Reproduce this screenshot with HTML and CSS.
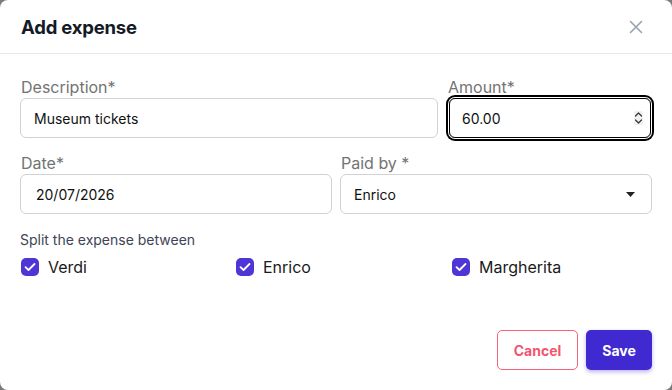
FILE: index.html
```html
<!DOCTYPE html>
<html>
<head>
<meta charset="utf-8">
<link rel="stylesheet" href="styles.css">
</head>
<body>
<div class="dialog">
  <div class="header">
    <h1 class="title">Add expense</h1>
    <button class="close" aria-label="Close">
      <svg width="14" height="14" viewBox="0 0 14 14"><path d="M1.5 1.5 L12.5 12.5 M12.5 1.5 L1.5 12.5" stroke="#9aa2ae" stroke-width="1.6" stroke-linecap="round"/></svg>
    </button>
  </div>
  <div class="body">
    <div class="row row-a">
      <div class="field">
        <label class="label">Description*</label>
        <div class="input">Museum tickets</div>
      </div>
      <div class="field">
        <label class="label">Amount*</label>
        <div class="input focused">
          <span>60.00</span>
          <svg class="spin" width="9" height="14" viewBox="0 0 9 14"><path d="M1.5 5 L4.5 2 L7.5 5 M1.5 9 L4.5 12 L7.5 9" fill="none" stroke="#333" stroke-width="1.2" stroke-linecap="round" stroke-linejoin="round"/></svg>
        </div>
      </div>
    </div>
    <div class="row row-b">
      <div class="field">
        <label class="label">Date*</label>
        <div class="input">20/07/2026</div>
      </div>
      <div class="field">
        <label class="label">Paid by *</label>
        <div class="input select">
          <span>Enrico</span>
          <svg width="9" height="5" viewBox="0 0 9 5"><path d="M0 0 H9 L4.5 5 Z" fill="#222"/></svg>
        </div>
      </div>
    </div>
    <div class="split">
      <div class="split-label">Split the expense between</div>
      <div class="checks">
        <label class="check"><span class="box"><svg width="12" height="10" viewBox="0 0 12 10"><path d="M1.5 5.2 L4.5 8 L10.5 2" fill="none" stroke="#fff" stroke-width="1.8" stroke-linecap="round" stroke-linejoin="round"/></svg></span>Verdi</label>
        <label class="check"><span class="box"><svg width="12" height="10" viewBox="0 0 12 10"><path d="M1.5 5.2 L4.5 8 L10.5 2" fill="none" stroke="#fff" stroke-width="1.8" stroke-linecap="round" stroke-linejoin="round"/></svg></span>Enrico</label>
        <label class="check"><span class="box"><svg width="12" height="10" viewBox="0 0 12 10"><path d="M1.5 5.2 L4.5 8 L10.5 2" fill="none" stroke="#fff" stroke-width="1.8" stroke-linecap="round" stroke-linejoin="round"/></svg></span>Margherita</label>
      </div>
    </div>
  </div>
  <div class="footer">
    <button class="btn cancel">Cancel</button>
    <button class="btn save">Save</button>
  </div>
</div>
</body>
</html>
```

FILE: styles.css
```css
* { box-sizing: border-box; }
html, body { margin: 0; padding: 0; }
body {
  background: #7b7b7b;
  font-family: Inter, "Liberation Sans", sans-serif;
  width: 672px;
  height: 390px;
  overflow: hidden;
}
.dialog {
  background: #fff;
  width: 672px;
  height: 390px;
  border-radius: 8px;
  display: flex;
  flex-direction: column;
}
.header {
  height: 54px;
  border-bottom: 1px solid #e8e8ea;
  display: flex;
  align-items: center;
  justify-content: space-between;
  padding: 0 29px 0 21px;
}
.title {
  margin: 0;
  font-size: 18.5px;
  font-weight: 700;
  color: #141a26;
  letter-spacing: -0.2px;
}
.close {
  border: 0;
  background: none;
  padding: 0;
  width: 14px;
  height: 14px;
  display: flex;
}
.body {
  padding: 23px 20px 0 20px;
  flex: 1;
}
.row {
  display: grid;
  gap: 8px;
}
.row-a { grid-template-columns: 418px 1fr; gap: 9px; }
.row-b { grid-template-columns: 1fr 1fr; margin-top: 15px; }
.field { display: flex; flex-direction: column; }
.label {
  font-size: 16px;
  color: #737373;
  line-height: 20px;
  height: 21px;
  padding-left: 1px;
}
.input {
  height: 40px;
  border: 1px solid #d2d2d2;
  border-radius: 6px;
  display: flex;
  align-items: center;
  justify-content: space-between;
  padding: 0 12px 0 13px;
  font-size: 14px;
  color: #111;
}
.focused {
  border: 1px solid #000;
  box-shadow: 0 0 0 1px #fff, 0 0 0 3px #000;
  margin: 0 1px 0 2px;
  padding: 0 7px 0 12px;
}
.row-b .input { padding-left: 15px; }
.row-b .select { padding-left: 13px; padding-right: 16px; }
.spin { background: #f0f0f0; border-radius: 2px; }
.split { margin-top: 18px; }
.split-label {
  font-size: 14px;
  color: #3d4555;
  line-height: 16px;
}
.checks {
  display: grid;
  grid-template-columns: 215px 216px 216px;
  margin-top: 9px;
}
.check {
  display: flex;
  align-items: center;
  gap: 9px;
  font-size: 16px;
  color: #1a1a1a;
  padding-left: 1px;
}
.box {
  width: 18px;
  height: 18px;
  border-radius: 5px;
  background: #4e35d6;
  display: flex;
  align-items: center;
  justify-content: center;
}
.footer {
  display: flex;
  justify-content: flex-end;
  gap: 8px;
  padding: 0 20px 20px 0;
}
.btn {
  height: 40px;
  border-radius: 5px;
  font-family: Inter, "Liberation Sans", sans-serif;
  font-size: 14px;
  font-weight: 700;
  cursor: pointer;
}
.cancel {
  width: 81px;
  background: #fff;
  border: 1px solid #f4647c;
  color: #f2566f;
}
.save {
  width: 66px;
  background: #4129d1;
  border: 0;
  color: #fff;
  box-shadow: 0 2px 4px rgba(65, 41, 209, 0.35);
}
```
